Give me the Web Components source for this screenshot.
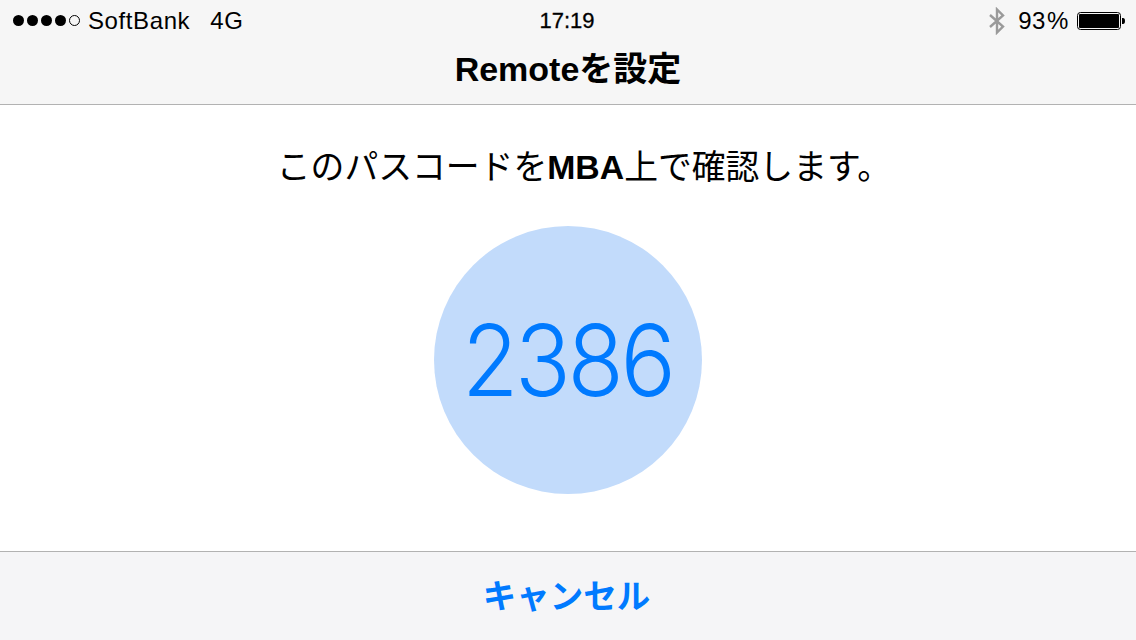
<!DOCTYPE html>
<html lang="ja">
<head>
<meta charset="utf-8">
<title>Remoteを設定</title>
<style>
  html, body { margin: 0; height: 100%; background: #fff; }
  body { font-family: "Liberation Sans", "Noto Sans CJK JP", sans-serif; }
</style>
</head>
<body>
<remote-screen>
  <status-bar slot="status"></status-bar>
  <nav-title slot="nav">Remoteを設定</nav-title>
  <passcode-panel slot="main" code="2386">このパスコードを<b>MBA</b>上で確認します。</passcode-panel>
  <cancel-bar slot="bottom">キャンセル</cancel-bar>
</remote-screen>

<script>
// Page frame
class RemoteScreen extends HTMLElement {
  constructor() {
    super();
    this.attachShadow({ mode: 'open' });
    this.shadowRoot.innerHTML = `
      <style>
        :host {
          display: flex;
          flex-direction: column;
          width: 1136px;
          height: 640px;
          overflow: hidden;
        }
        header {
          background: #f6f6f6;
          border-bottom: 1px solid #b2b2b2;
          height: 104px;
          flex: none;
        }
        main { flex: 1; min-height: 0; }
      </style>
      <header>
        <slot name="status"></slot>
        <slot name="nav"></slot>
      </header>
      <main><slot name="main"></slot></main>
      <slot name="bottom"></slot>
    `;
  }
}

// Status bar
class StatusBar extends HTMLElement {
  constructor() {
    super();
    this.attachShadow({ mode: 'open' });
    this.shadowRoot.innerHTML = `
      <style>
        :host {
          display: grid;
          grid-template-columns: 1fr auto 1fr;
          align-items: center;
          height: 41px;
          padding: 0 11px 0 13px;
          font-size: 24px;
          letter-spacing: 0.6px;
          color: #000;
        }
        .left, .right { display: flex; align-items: center; }
        .right { justify-content: flex-end; }
        .dots { display: flex; gap: 3px; margin-right: 8px; }
        .dots i {
          width: 11px;
          height: 11px;
          border-radius: 50%;
          background: #000;
          box-sizing: border-box;
        }
        .dots i.off { background: none; border: 1px solid #000; }
        .net { margin-left: 20px; }
        .time {
          font-size: 22px;
          letter-spacing: 0;
          margin-right: 4px;
          -webkit-text-stroke: 0.3px #000;
        }
        .bt { margin-right: 12px; }
        .pct { margin-right: 8px; }
        .pct span { margin-left: 1px; }
      </style>
      <div class="left">
        <div class="dots"><i></i><i></i><i></i><i></i><i class="off"></i></div>
        <span>SoftBank</span>
        <span class="net">4G</span>
      </div>
      <div class="time">17:19</div>
      <div class="right">
        <svg class="bt" width="18" height="28" viewBox="0 0 18 28" fill="none" stroke="#9a9a9a" stroke-width="2.4">
          <path d="M2 8 L15 19.5 L9 25.5 V2.5 L15 8.5 L2 20"/>
        </svg>
        <span class="pct">93<span>%</span></span>
        <svg width="48" height="20" viewBox="0 0 48 20">
          <rect x="0.5" y="1.5" width="43" height="17" rx="3" fill="none" stroke="#000" stroke-width="1"/>
          <rect x="2" y="3" width="40" height="14" rx="1" fill="#000"/>
          <path d="M45 7 h1 a2 3 0 0 1 0 6 h-1 z" fill="#000"/>
        </svg>
      </div>
    `;
  }
}

// Nav title
class NavTitle extends HTMLElement {
  constructor() {
    super();
    this.attachShadow({ mode: 'open' });
    this.shadowRoot.innerHTML = `
      <style>
        :host {
          display: block;
          height: 63px;
          line-height: 57px;
          text-align: center;
          font-size: 34px;
          font-weight: 700;
          color: #000;
        }
      </style>
      <slot></slot>
    `;
  }
}

// Message and passcode circle
class PasscodePanel extends HTMLElement {
  constructor() {
    super();
    this.attachShadow({ mode: 'open' });
  }

  connectedCallback() {
    this.shadowRoot.innerHTML = `
      <style>
        :host {
          display: flex;
          flex-direction: column;
          align-items: center;
          padding-top: 40px;
        }
        .msg {
          font-size: 33.8px;
          line-height: 44px;
          color: #000;
          white-space: nowrap;
          padding-left: 32px;
        }
        .circle {
          width: 268px;
          height: 268px;
          margin-top: 37px;
          border-radius: 50%;
          background: #c2dbfb;
          color: #007aff;
          display: flex;
          align-items: center;
          justify-content: center;
          font-family: Inter, sans-serif;
          font-weight: 300;
          font-size: 99px;
          letter-spacing: -3.6px;
        }
        .code { transform: scaleX(0.93); margin-right: 2px; }
      </style>
      <div class="msg"><slot></slot></div>
      <div class="circle"><span class="code">${this.getAttribute('code')}</span></div>
    `;
  }
}

// Bottom cancel bar
class CancelBar extends HTMLElement {
  constructor() {
    super();
    this.attachShadow({ mode: 'open' });
    this.shadowRoot.innerHTML = `
      <style>
        :host {
          display: flex;
          align-items: center;
          justify-content: center;
          flex: none;
          box-sizing: border-box;
          height: 89px;
          padding: 0 3px 6px 0;
          background: #f5f5f7;
          border-top: 1px solid #b2b2b2;
          color: #007aff;
          font-size: 33.5px;
          font-weight: 700;
        }
      </style>
      <slot></slot>
    `;
  }
}

customElements.define('remote-screen', RemoteScreen);
customElements.define('status-bar', StatusBar);
customElements.define('nav-title', NavTitle);
customElements.define('passcode-panel', PasscodePanel);
customElements.define('cancel-bar', CancelBar);
</script>
</body>
</html>
